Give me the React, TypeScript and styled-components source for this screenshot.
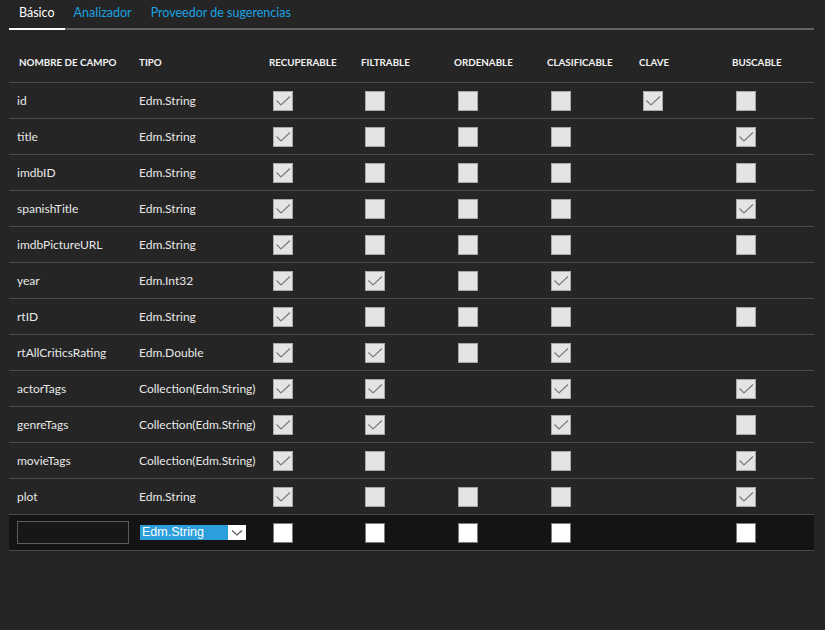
import React from 'react';
import styled, { createGlobalStyle } from 'styled-components';

const GlobalStyle = createGlobalStyle`
  html, body {
    margin: 0;
    padding: 0;
    background: #252525;
  }
  body {
    font-family: Lato, "Noto Sans", sans-serif;
  }
`;

const COLS = '122px 130px 92px 93px 93px 92px 93px 90px';

const Page = styled.div`
  width: 825px;
  height: 630px;
  background: #252525;
  padding: 0 11px 0 9px;
  box-sizing: border-box;
`;

const Tabs = styled.div`
  display: flex;
  height: 28px;
  border-bottom: 2px solid #646464;
`;

const Tab = styled.div<{ $active?: boolean }>`
  padding: 5px 10px 0 10px;
  margin-bottom: -2px;
  font-family: Lato, "Noto Sans", sans-serif;
  font-size: 12.5px;
  color: ${p => (p.$active ? '#ffffff' : '#1ba1e2')};
  border-bottom: 2px solid ${p => (p.$active ? '#ffffff' : 'transparent')};
  box-sizing: border-box;
  & + & {
    margin-left: -1px;
  }
`;

const Table = styled.div`
  margin-top: 12px;
`;

const HeaderRow = styled.div`
  display: grid;
  grid-template-columns: ${COLS};
  height: 40px;
  align-items: center;
  border-bottom: 1px solid #4a4a4a;
`;

const HeadCell = styled.div`
  padding-left: 10px;
  font-family: Lato, "Noto Sans", sans-serif;
  font-weight: 700;
  font-size: 9.8px;
  color: #f2f2f2;
  white-space: nowrap;
  &:nth-child(n + 2) {
    padding-left: 8px;
  }
`;

const Row = styled.div<{ $new?: boolean }>`
  display: grid;
  grid-template-columns: ${COLS};
  height: 35px;
  align-items: center;
  border-bottom: 1px solid #4a4a4a;
  background: ${p => (p.$new ? '#141414' : 'transparent')};
`;

const TextCell = styled.div`
  padding-left: 8px;
  font-family: Lato, "Noto Sans", sans-serif;
  font-size: 12px;
  color: #e8e8e8;
  white-space: nowrap;
`;

const BoxCell = styled.div`
  padding-left: 12px;
  display: flex;
  align-items: center;
`;

const Box = styled.div<{ $white?: boolean }>`
  width: 20px;
  height: 20px;
  box-sizing: border-box;
  background: ${p => (p.$white ? '#ffffff' : '#e4e4e4')};
  border: 1px solid ${p => (p.$white ? '#7a7a7a' : '#a8a8a8')};
  display: flex;
  align-items: center;
  justify-content: center;
`;

const NameInput = styled.div`
  margin-left: 8px;
  width: 112px;
  height: 23px;
  box-sizing: border-box;
  border: 1px solid #5c5c5c;
  background: #171717;
`;

const Select = styled.div`
  margin-left: 9px;
  width: 106px;
  height: 15px;
  background: #ffffff;
  display: flex;
  align-items: stretch;
`;

const SelectValue = styled.div`
  width: 88px;
  background: #2b9edb;
  color: #ffffff;
  font-family: "Liberation Sans", Arial, sans-serif;
  font-size: 12.5px;
  line-height: 15px;
  padding-left: 2px;
  box-sizing: border-box;
`;

const SelectArrow = styled.div`
  flex: 1;
  display: flex;
  align-items: center;
  justify-content: center;
`;

type Flag = 'x' | 'o' | '-';

// recuperable, filtrable, ordenable, clasificable, clave, buscable
const fields: [string, string, string][] = [
  ['id', 'Edm.String', 'xoooxo'],
  ['title', 'Edm.String', 'xooo-x'],
  ['imdbID', 'Edm.String', 'xooo-o'],
  ['spanishTitle', 'Edm.String', 'xooo-x'],
  ['imdbPictureURL', 'Edm.String', 'xooo-o'],
  ['year', 'Edm.Int32', 'xxox--'],
  ['rtID', 'Edm.String', 'xooo-o'],
  ['rtAllCriticsRating', 'Edm.Double', 'xxox--'],
  ['actorTags', 'Collection(Edm.String)', 'xx-x-x'],
  ['genreTags', 'Collection(Edm.String)', 'xx-x-o'],
  ['movieTags', 'Collection(Edm.String)', 'xo-o-x'],
  ['plot', 'Edm.String', 'xooo-x'],
];

const Check = () => (
  <svg width="18" height="18" viewBox="0 0 18 18">
    <path d="M2.5 8.5 L7 13 L16 4.5" fill="none" stroke="#7b7b7b" strokeWidth="1.2" />
  </svg>
);

const Chevron = () => (
  <svg width="12" height="8" viewBox="0 0 12 8">
    <path d="M1 1.5 L6 6 L11 1.5" fill="none" stroke="#555" strokeWidth="1.1" />
  </svg>
);

const FlagCell = ({ flag, white }: { flag: Flag; white?: boolean }) => (
  <BoxCell>
    {flag !== '-' && <Box $white={white}>{flag === 'x' && <Check />}</Box>}
  </BoxCell>
);

const headers = [
  'NOMBRE DE CAMPO',
  'TIPO',
  'RECUPERABLE',
  'FILTRABLE',
  'ORDENABLE',
  'CLASIFICABLE',
  'CLAVE',
  'BUSCABLE',
];

const App = () => {
  return (
    <Page>
      <GlobalStyle />
      <Tabs>
        <Tab $active>Básico</Tab>
        <Tab>Analizador</Tab>
        <Tab>Proveedor de sugerencias</Tab>
      </Tabs>
      <Table>
        <HeaderRow>
          {headers.map(h => (
            <HeadCell key={h}>{h}</HeadCell>
          ))}
        </HeaderRow>
        {fields.map(([name, type, flags]) => (
          <Row key={name}>
            <TextCell>{name}</TextCell>
            <TextCell>{type}</TextCell>
            {flags.split('').map((f, i) => (
              <FlagCell key={i} flag={f as Flag} />
            ))}
          </Row>
        ))}
        <Row $new>
          <div>
            <NameInput />
          </div>
          <div>
            <Select>
              <SelectValue>Edm.String</SelectValue>
              <SelectArrow>
                <Chevron />
              </SelectArrow>
            </Select>
          </div>
          {'oooo-o'.split('').map((f, i) => (
            <FlagCell key={i} flag={f as Flag} white />
          ))}
        </Row>
      </Table>
    </Page>
  );
};

export default App;
